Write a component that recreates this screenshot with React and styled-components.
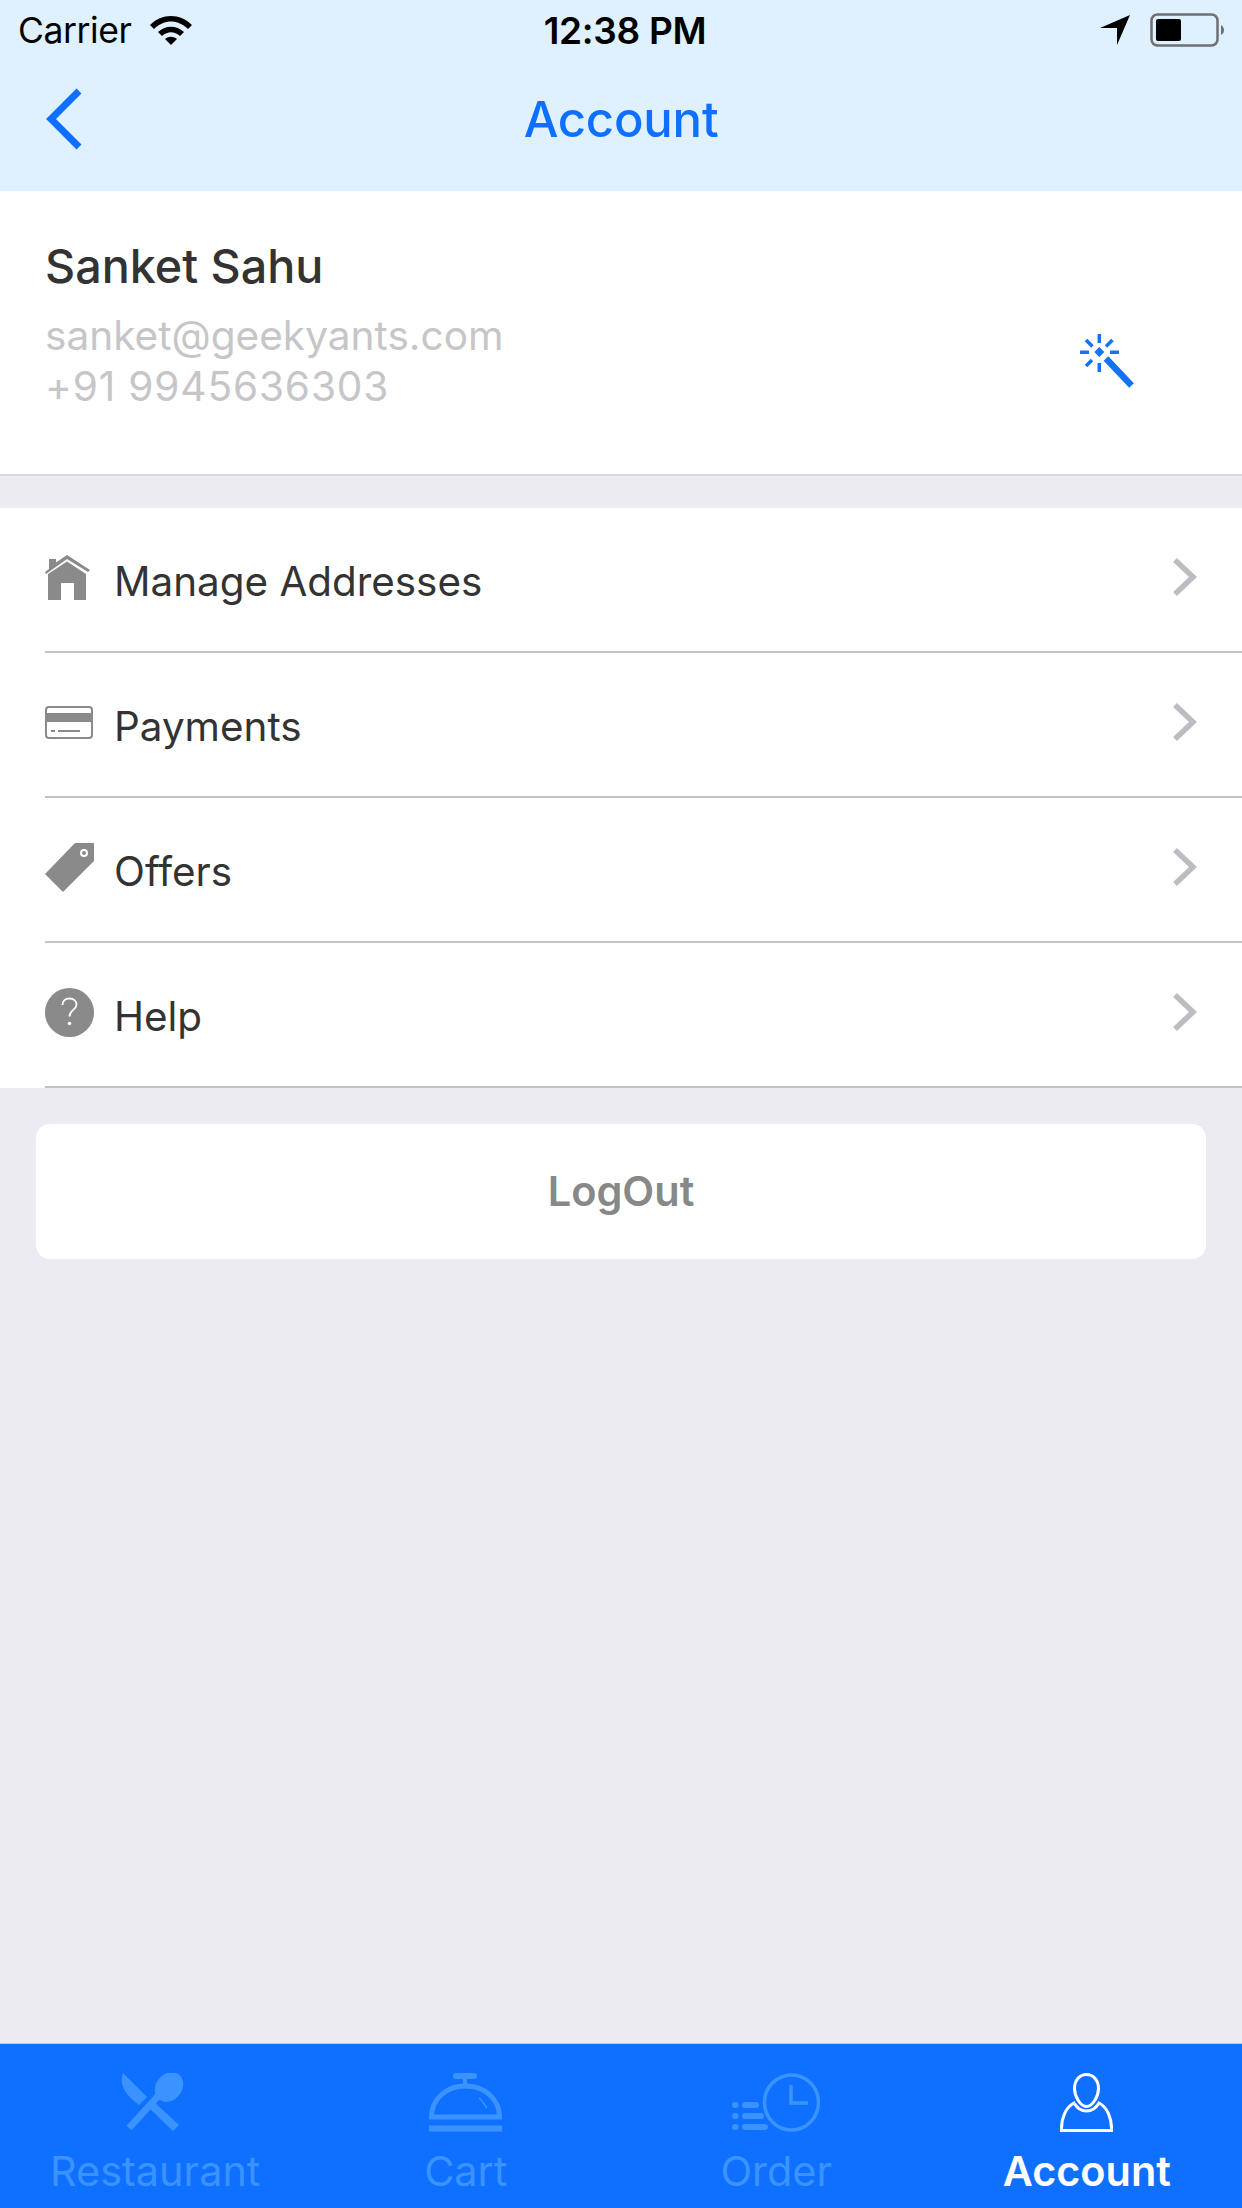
import React from "react";
import styled, { createGlobalStyle } from "styled-components";

const Global = createGlobalStyle`
  html, body { margin: 0; padding: 0; background: #ebebf1; }
  * { box-sizing: border-box; }
  #root { font-family: Inter, "Liberation Sans", sans-serif; }
`;
const Page = styled.div`
  width: 1242px; height: 2208px; display: flex; flex-direction: column; background: #ebebf1; overflow: hidden;
`;
const Header = styled.header`
  height: 191px; flex: none; background: #dff0ff; display: flex; flex-direction: column;
`;
const StatusBar = styled.div`
  height: 60px; display: grid; grid-template-columns: 1fr auto 1fr; align-items: center; padding: 0 18px; color: #000;
`;
const StatusLeft = styled.div`display: flex; align-items: center; gap: 18px; font-size: 35.5px; letter-spacing: -0.4px;`;
const Clock = styled.div`font-size: 37px; font-weight: 600; letter-spacing: -0.3px; margin-left: 8px;`;
const StatusRight = styled.div`display: flex; justify-content: flex-end; align-items: center; gap: 20px;`;
const NavBar = styled.div`
  flex: 1; display: grid; grid-template-columns: 1fr auto 1fr; align-items: center; padding: 0 45px 13px;
`;
const Title = styled.div`color: #0f70ff; font-size: 49px; font-weight: 500; letter-spacing: -0.2px;`;
const Profile = styled.section`
  height: 285px; flex: none; background: #fff; border-bottom: 2px solid #d8d8dc; display: flex; align-items: flex-start;
  justify-content: space-between; padding: 46px 108px 0 45px;
`;
const ProfileText = styled.div`display: flex; flex-direction: column;`;
const Name = styled.div`color: #333; font-size: 46.7px; font-weight: 500; line-height: 58px; margin-bottom: 16px;`;
const Contact = styled.div`
  color: #c6c6c8; font-size: 40.6px; line-height: 50.5px; letter-spacing: ${p => (p.$wide ? "0.85px" : "0")};
`;
const WandHolder = styled.div`margin-top: 97px;`;
const Menu = styled.nav`margin-top: 32px; background: #fff; flex: none;`;
const Row = styled.div`
  height: 145px; margin-left: 45px; border-bottom: 2px solid #c4c4c4; display: flex; align-items: center; padding-right: 45px;
`;
const IconBox = styled.div`width: 69px; flex: none; display: flex; padding-bottom: 5px;`;
const Label = styled.div`flex: 1; color: #333; font-size: 40.4px; padding-top: 3px;`;
const Chevron = styled.svg`width: 24px; height: 40px; margin-bottom: 6px; display: block;`;
const LogoutButton = styled.div`
  margin: 36px 36px 0; height: 135px; background: #fff; border-radius: 14px; display: flex; align-items: center;
  justify-content: center; color: #888; font-size: 41.5px; font-weight: 600; flex: none; padding-bottom: 1px;
`;
const Spacer = styled.div`flex: 1;`;
const TabBar = styled.footer`
  height: 165px; flex: none; background: #0f70ff; border-top: 1px solid #c8c8d0; display: grid; grid-template-columns: repeat(4, 1fr);
`;
const Tab = styled.div`
  display: flex; flex-direction: column; align-items: center; padding-top: 29px; color: ${p => (p.$active ? "#fff" : "#3b93ff")};
`;
const TabIcon = styled.div`height: 59px; display: flex; align-items: center; justify-content: center;`;
const TabLabel = styled.div`
  margin-top: 14px; font-size: 41.4px; line-height: 50px; font-weight: ${p => (p.$active ? 600 : 400)};
`;

const ChevronRight = () => (
  <Chevron viewBox="0 0 24 40"><path d="M2 3 L20 20 L2 37" fill="none" stroke="#bcbcc2" strokeWidth="5.5" /></Chevron>
);
const HomeIcon = () => (
  <svg width="45" height="45" viewBox="0 0 45 45" fill="#8a8a8a">
    <path d="M4 13V4h7v3.500L22 0l23 15-2 2L22 4 1 19l-1-2 4-3z" />
    <path d="M3 19 22 6.500 41 19v26H29V28H16v17H3z" />
  </svg>
);
const CardIcon = () => (
  <svg width="48" height="33" viewBox="0 0 48 33">
    <rect x="1" y="1" width="46" height="31" rx="3" fill="none" stroke="#8a8a8a" strokeWidth="2" />
    <rect x="1" y="7" width="46" height="9" fill="#8a8a8a" />
    <rect x="6" y="24" width="4" height="2" fill="#8a8a8a" />
    <rect x="13" y="24" width="22" height="2" fill="#8a8a8a" />
  </svg>
);
const TagIcon = () => (
  <svg width="49" height="49" viewBox="0 0 49 49">
    <path d="M30 0H49V18L18 49 0 31z" fill="#8a8a8a" />
    <circle cx="39" cy="10" r="3" fill="none" stroke="#fff" strokeWidth="2" />
  </svg>
);
const HelpIcon = () => (
  <svg width="49" height="49" viewBox="0 0 49 49">
    <circle cx="24.500" cy="24.500" r="24.500" fill="#8a8a8a" />
    <path d="M17.500 17c0-4 3-6.500 7-6.500s7 2.500 7 6c0 5.500-7 5.500-7 12" fill="none" stroke="#fff" strokeWidth="1.800" />
    <circle cx="24.500" cy="35.500" r="1.800" fill="#fff" />
  </svg>
);
const WandIcon = () => (
  <svg width="54" height="54" viewBox="0 0 54 54" fill="none" stroke="#1273f5" strokeWidth="3.500" style={{ display: "block" }}>
    <path d="M19.300 0v9M19.300 29v9M0 18.300h9M30 18.300h9M6 6l6.500 6.500M32.500 6 26 12.500M6 32l6-6" />
    <path d="M19.300 13l5 5-5 5-5-5z" fill="#1273f5" stroke="none" />
    <path d="M26 24.500 51.500 51.500" strokeWidth="6.500" />
  </svg>
);
const Wifi = () => (
  <svg width="42" height="29" viewBox="0 0 42 29" fill="#000">
    <path d="M0 9C12-3 30-3 42 9l-4 4C28 3 14 3 4 13z" />
    <path d="M8 16c8-7 18-7 26 0l-4 4c-6-5-12-5-18 0z" />
    <path d="M15 23c4-3 8-3 12 0l-6 6z" />
  </svg>
);
const Arrow = () => (
  <svg width="30" height="30" viewBox="0 0 30 30" fill="#000"><path d="M30 0 17 30V13H0z" /></svg>
);
const Battery = () => (
  <svg width="74" height="34" viewBox="0 0 74 34">
    <rect x="1.500" y="1.500" width="66" height="31" rx="6" fill="none" stroke="#6f6f75" strokeWidth="2.500" />
    <rect x="6" y="6" width="25" height="22" rx="2" fill="#000" />
    <path d="M71 12c2 1 3 3 3 5s-1 4-3 5z" fill="#6f6f75" />
  </svg>
);
const Back = () => (
  <svg width="38" height="62" viewBox="0 0 38 62" style={{ display: "block" }}>
    <path d="M34 3 6 31l28 28" fill="none" stroke="#0f70ff" strokeWidth="7" />
  </svg>
);
const Dining = () => (
  <svg width="68" height="59" viewBox="0 0 68 59" fill="currentColor">
    <path d="M2 0 26 24l-8 8C8 24-3 15 2 0z" />
    <path d="M31 27 58 52l-6 6L25 32z" />
    <ellipse cx="48" cy="14" rx="13" ry="16" transform="rotate(38 48 14)" />
    <path d="M39 21 8 55" fill="none" stroke="currentColor" strokeWidth="7" />
  </svg>
);
const Bell = () => (
  <svg width="73" height="59" viewBox="0 0 73 59" fill="none" stroke="currentColor">
    <path d="M27 3h18" strokeWidth="6" strokeLinecap="round" />
    <path d="M36 4v9" strokeWidth="4" />
    <path d="M2.500 44c0-18 15-31 34-31s34 13 34 31z" strokeWidth="5" />
    <path d="M50 25c3 2 5 6 8 10" strokeWidth="1.500" />
    <path d="M0 55.500h73" strokeWidth="6" />
  </svg>
);
const OrderClock = () => (
  <svg width="88" height="59" viewBox="0 0 88 59" fill="none" stroke="currentColor">
    <ellipse cx="59.500" cy="29.500" rx="27" ry="27.500" strokeWidth="3.500" />
    <path d="M59 12v18h17" strokeWidth="3.500" />
    <g strokeWidth="6" strokeLinecap="round">
      <path d="M3 32h.5M3 43h.5M3 54h.5" />
      <path d="M13 32h11M13 43h16M13 54h20" />
    </g>
  </svg>
);
const Person = () => (
  <svg width="53" height="59" viewBox="0 0 53 59" fill="none" stroke="currentColor" strokeWidth="3">
    <path d="M26.500 1.500c7 0 12 6 12 14 0 8-6 18-12 18s-12-10-12-18c0-8 5-14 12-14z" />
    <path d="M14 30C6 34 1 45 1.500 57.500h50C52 45 47 34 39 30c-3 5-7 8-12.500 8S17 35 14 30z" />
  </svg>
);

const rows = [
  ["Manage Addresses", <HomeIcon />],
  ["Payments", <CardIcon />],
  ["Offers", <TagIcon />],
  ["Help", <HelpIcon />],
];
const tabs = [
  ["Restaurant", <Dining />],
  ["Cart", <Bell />],
  ["Order", <OrderClock />],
  ["Account", <Person />, true],
];

export default function App() {
  return (
    <Page>
      <Global />
      <Header>
        <StatusBar>
          <StatusLeft>Carrier <Wifi /></StatusLeft>
          <Clock>12:38 PM</Clock>
          <StatusRight><Arrow /><Battery /></StatusRight>
        </StatusBar>
        <NavBar>
          <Back />
          <Title>Account</Title>
        </NavBar>
      </Header>
      <Profile>
        <ProfileText>
          <Name>Sanket Sahu</Name>
          <Contact>sanket@geekyants.com</Contact>
          <Contact $wide>+91 9945636303</Contact>
        </ProfileText>
        <WandHolder><WandIcon /></WandHolder>
      </Profile>
      <Menu>
        {rows.map(([label, icon]) => (
          <Row key={label}>
            <IconBox>{icon}</IconBox>
            <Label>{label}</Label>
            <ChevronRight />
          </Row>
        ))}
      </Menu>
      <LogoutButton>LogOut</LogoutButton>
      <Spacer />
      <TabBar>
        {tabs.map(([label, icon, active]) => (
          <Tab key={label} $active={active}>
            <TabIcon>{icon}</TabIcon>
            <TabLabel $active={active}>{label}</TabLabel>
          </Tab>
        ))}
      </TabBar>
    </Page>
  );
}
